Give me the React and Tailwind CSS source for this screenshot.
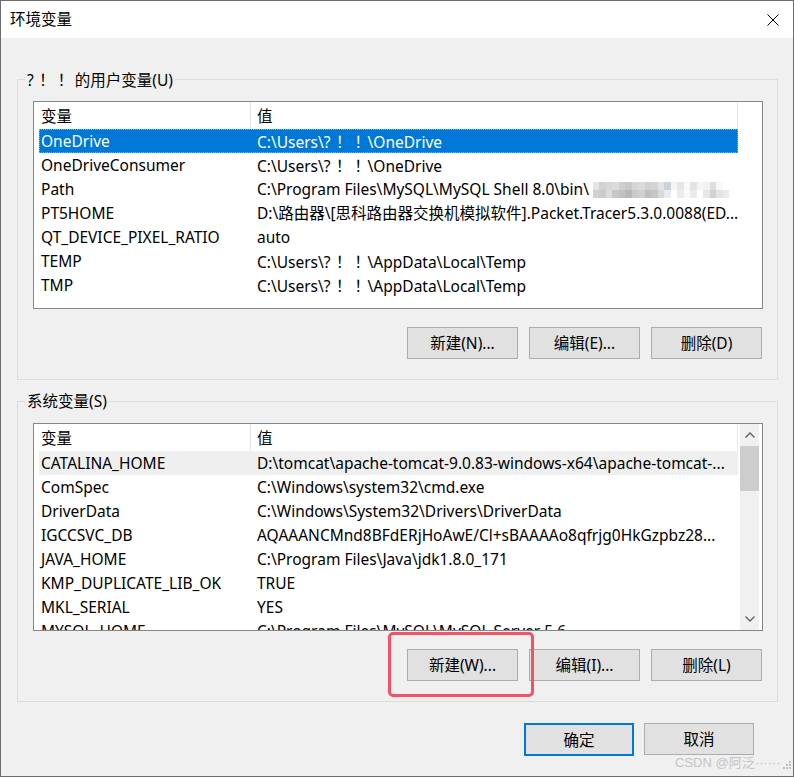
import React from "react";

const userVars = [
  ["OneDrive", "C:\\Users\\?！！\\OneDrive"],
  ["OneDriveConsumer", "C:\\Users\\?！！\\OneDrive"],
  ["Path", "C:\\Program Files\\MySQL\\MySQL Shell 8.0\\bin\\", true],
  ["PT5HOME", "D:\\路由器\\[思科路由器交换机模拟软件].Packet.Tracer5.3.0.0088(ED..."],
  ["QT_DEVICE_PIXEL_RATIO", "auto"],
  ["TEMP", "C:\\Users\\?！！\\AppData\\Local\\Temp"],
  ["TMP", "C:\\Users\\?！！\\AppData\\Local\\Temp"],
];

const sysVars = [
  ["CATALINA_HOME", "D:\\tomcat\\apache-tomcat-9.0.83-windows-x64\\apache-tomcat-..."],
  ["ComSpec", "C:\\Windows\\system32\\cmd.exe"],
  ["DriverData", "C:\\Windows\\System32\\Drivers\\DriverData"],
  ["IGCCSVC_DB", "AQAAANCMnd8BFdERjHoAwE/Cl+sBAAAAo8qfrjg0HkGzpbz28..."],
  ["JAVA_HOME", "C:\\Program Files\\Java\\jdk1.8.0_171"],
  ["KMP_DUPLICATE_LIB_OK", "TRUE"],
  ["MKL_SERIAL", "YES"],
  ["MYSQL_HOME", "C:\\Program Files\\MySQL\\MySQL Server 5.6"],
];

const blurTop = ["#e4e4e4","#d2d2d2","#d8d8d8","#dcdcdc","#cfcfcf","#c8c8c8","#d6d6d6","#dadada","#d0d0d0","#d4d4d4","#e2e2e2","#cdd2d8","#f4f4f4","#e6e6e6","#f8f8f8","#e4e4e4","#f4f4f4","#f6f1ec","#dedede","#f8f8f8","#ffffff"];
const blurBot = ["#d0d0d0","#cbcbcb","#dcdcdc","#c8c8c8","#c2c2c2","#b8b8b8","#cacaca","#d0d0d0","#bfbfbf","#c6c6c6","#dadada","#e6ecf2","#ffffff","#ececec","#fafafa","#ececec","#ffffff","#e6e6e6","#d2d2d2","#e4e4e4","#ececec"];

function T({ text }) {
  const parts = text.split(/(！)/);
  return (
    <>
      {parts.map((p, i) =>
        p === "！" ? (
          <span key={i} className="mx-[1.5px] font-['Noto_Sans_CJK_JP',sans-serif]">！</span>
        ) : (
          <React.Fragment key={i}>{p}</React.Fragment>
        )
      )}
    </>
  );
}

function Blur() {
  return (
    <span className="inline-flex flex-col ml-[4px] align-middle">
      <span className="flex">
        {blurTop.map((c, i) => (
          <span key={i} className="w-[6.5px] h-[8px]" style={{ backgroundColor: c }} />
        ))}
      </span>
      <span className="flex">
        {blurBot.map((c, i) => (
          <span key={i} className="w-[6.5px] h-[8px]" style={{ backgroundColor: c }} />
        ))}
      </span>
    </span>
  );
}

function Chevron({ up }) {
  return (
    <svg width="10" height="6" viewBox="0 0 10 6" className="block">
      {up ? (
        <polyline points="0.5,5.5 5,1 9.5,5.5" fill="none" stroke="#606060" strokeWidth="1.3" />
      ) : (
        <polyline points="0.5,0.5 5,5 9.5,0.5" fill="none" stroke="#606060" strokeWidth="1.3" />
      )}
    </svg>
  );
}

function List({ rows, selected, hover, scrollbar }) {
  return (
    <div className="w-[730px] h-[208px] border border-[#828790] bg-white flex overflow-hidden">
      <div className="w-[705px] pl-[5px] flex flex-col shrink-0">
        <div className="h-[27px] flex shrink-0">
          <div className="w-[212px] pl-[2px] pt-[2px] border-r border-[#e5e5e5] flex items-center">变量</div>
          <div className="w-[487px] pl-[6px] pt-[2px] border-r border-[#e5e5e5] flex items-center">值</div>
        </div>
        {rows.map(([k, v, blur], i) => {
          const sel = i === selected;
          const hov = i === hover;
          return (
            <div
              key={k}
              className={
                "h-[24px] w-[699px] pt-[2px] flex items-center shrink-0 whitespace-nowrap " +
                (sel
                  ? "bg-[#0078d7] text-white outline-1 outline-dotted outline-[#e59b4a] -outline-offset-1"
                  : hov
                  ? "bg-[#efefef]"
                  : "")
              }
            >
              <div className="w-[212px] pl-[2px] overflow-hidden">{k}</div>
              <div className="w-[487px] pl-[6px] overflow-hidden flex items-center">
                <span>
                  <T text={v} />
                </span>
                {blur && <Blur />}
              </div>
            </div>
          );
        })}
      </div>
      {scrollbar && (
        <div className="ml-[1px] w-[19px] bg-[#f0f0f0] flex flex-col shrink-0">
          <div className="h-[22px] flex items-center justify-center shrink-0">
            <Chevron up />
          </div>
          <div className="h-[45px] bg-[#cdcdcd] shrink-0" />
          <div className="flex-1" />
          <div className="h-[22px] flex items-center justify-center shrink-0">
            <Chevron />
          </div>
        </div>
      )}
    </div>
  );
}

function Btn({ children, primary, w = "w-[111px]" }) {
  return (
    <div
      className={
        w +
        " flex items-center justify-center pt-[2px] bg-[#e1e1e1] " +
        (primary ? "h-[33px] border-2 border-[#0078d7]" : "h-[32px] border border-[#adadad]")
      }
    >
      {children}
    </div>
  );
}

function Group({ label, rows, selected, hover, scrollbar, buttons }) {
  return (
    <div className="relative w-[761px] h-[301px] border border-[#dcdcdc] pt-[21px] pl-[15px]">
      <span className="absolute left-[7px] top-[-11px] px-[2px] bg-[#f0f0f0] leading-[20px] whitespace-nowrap">
        <T text={label} />
      </span>
      <List rows={rows} selected={selected} hover={hover} scrollbar={scrollbar} />
      <div className="mt-[18px] w-[730px] flex justify-end gap-[11px] pr-[1px]">
        {buttons.map((b) => (
          <Btn key={b}>{b}</Btn>
        ))}
      </div>
    </div>
  );
}

export default function App() {
  return (
    <div className="relative w-[794px] h-[777px] border border-[#6d6d6d] bg-[#f0f0f0] text-[15.5px] text-black font-['Noto_Sans','Noto_Sans_CJK_SC',sans-serif] flex flex-col overflow-hidden">
      <div className="h-[37px] bg-white flex items-center justify-between pl-[9px] pr-[14px] shrink-0">
        <span>环境变量</span>
        <svg width="12" height="12" viewBox="0 0 12 12">
          <line x1="0.5" y1="0.5" x2="11.5" y2="11.5" stroke="#000" strokeWidth="1" />
          <line x1="11.5" y1="0.5" x2="0.5" y2="11.5" stroke="#000" strokeWidth="1" />
        </svg>
      </div>
      <div className="pl-[16px] pt-[41px] flex flex-col">
        <Group
          label="?！！ 的用户变量(U)"
          rows={userVars}
          selected={0}
          buttons={["新建(N)...", "编辑(E)...", "删除(D)"]}
        />
        <div className="h-[21px]" />
        <Group
          label="系统变量(S)"
          rows={sysVars}
          hover={0}
          scrollbar
          buttons={["新建(W)...", "编辑(I)...", "删除(L)"]}
        />
        <div className="mt-[21px] flex justify-end gap-[10px] pr-[40px] w-[777px]">
          <Btn primary w="w-[110px]">确定</Btn>
          <Btn w="w-[110px]">取消</Btn>
        </div>
      </div>
      <div className="absolute left-[387px] top-[631px] w-[146px] h-[65px] border-[3px] border-[#f25467] rounded-[5px]" />
      <div className="absolute left-[674px] top-[753px] flex items-center text-[13px] leading-[18px] text-[#c4c4c4] whitespace-nowrap font-['Liberation_Sans','Noto_Sans_CJK_SC',sans-serif]">
        <span>CSDN @阿泛······</span>
        <svg width="10" height="10" viewBox="0 0 10 10" className="ml-[1px] mt-[4px]">
          <rect x="7" y="1" width="2" height="2" fill="#c4c4c4" />
          <rect x="4" y="4" width="2" height="2" fill="#c4c4c4" />
          <rect x="7" y="4" width="2" height="2" fill="#c4c4c4" />
          <rect x="1" y="7" width="2" height="2" fill="#c4c4c4" />
          <rect x="4" y="7" width="2" height="2" fill="#c4c4c4" />
          <rect x="7" y="7" width="2" height="2" fill="#c4c4c4" />
        </svg>
      </div>
    </div>
  );
}
